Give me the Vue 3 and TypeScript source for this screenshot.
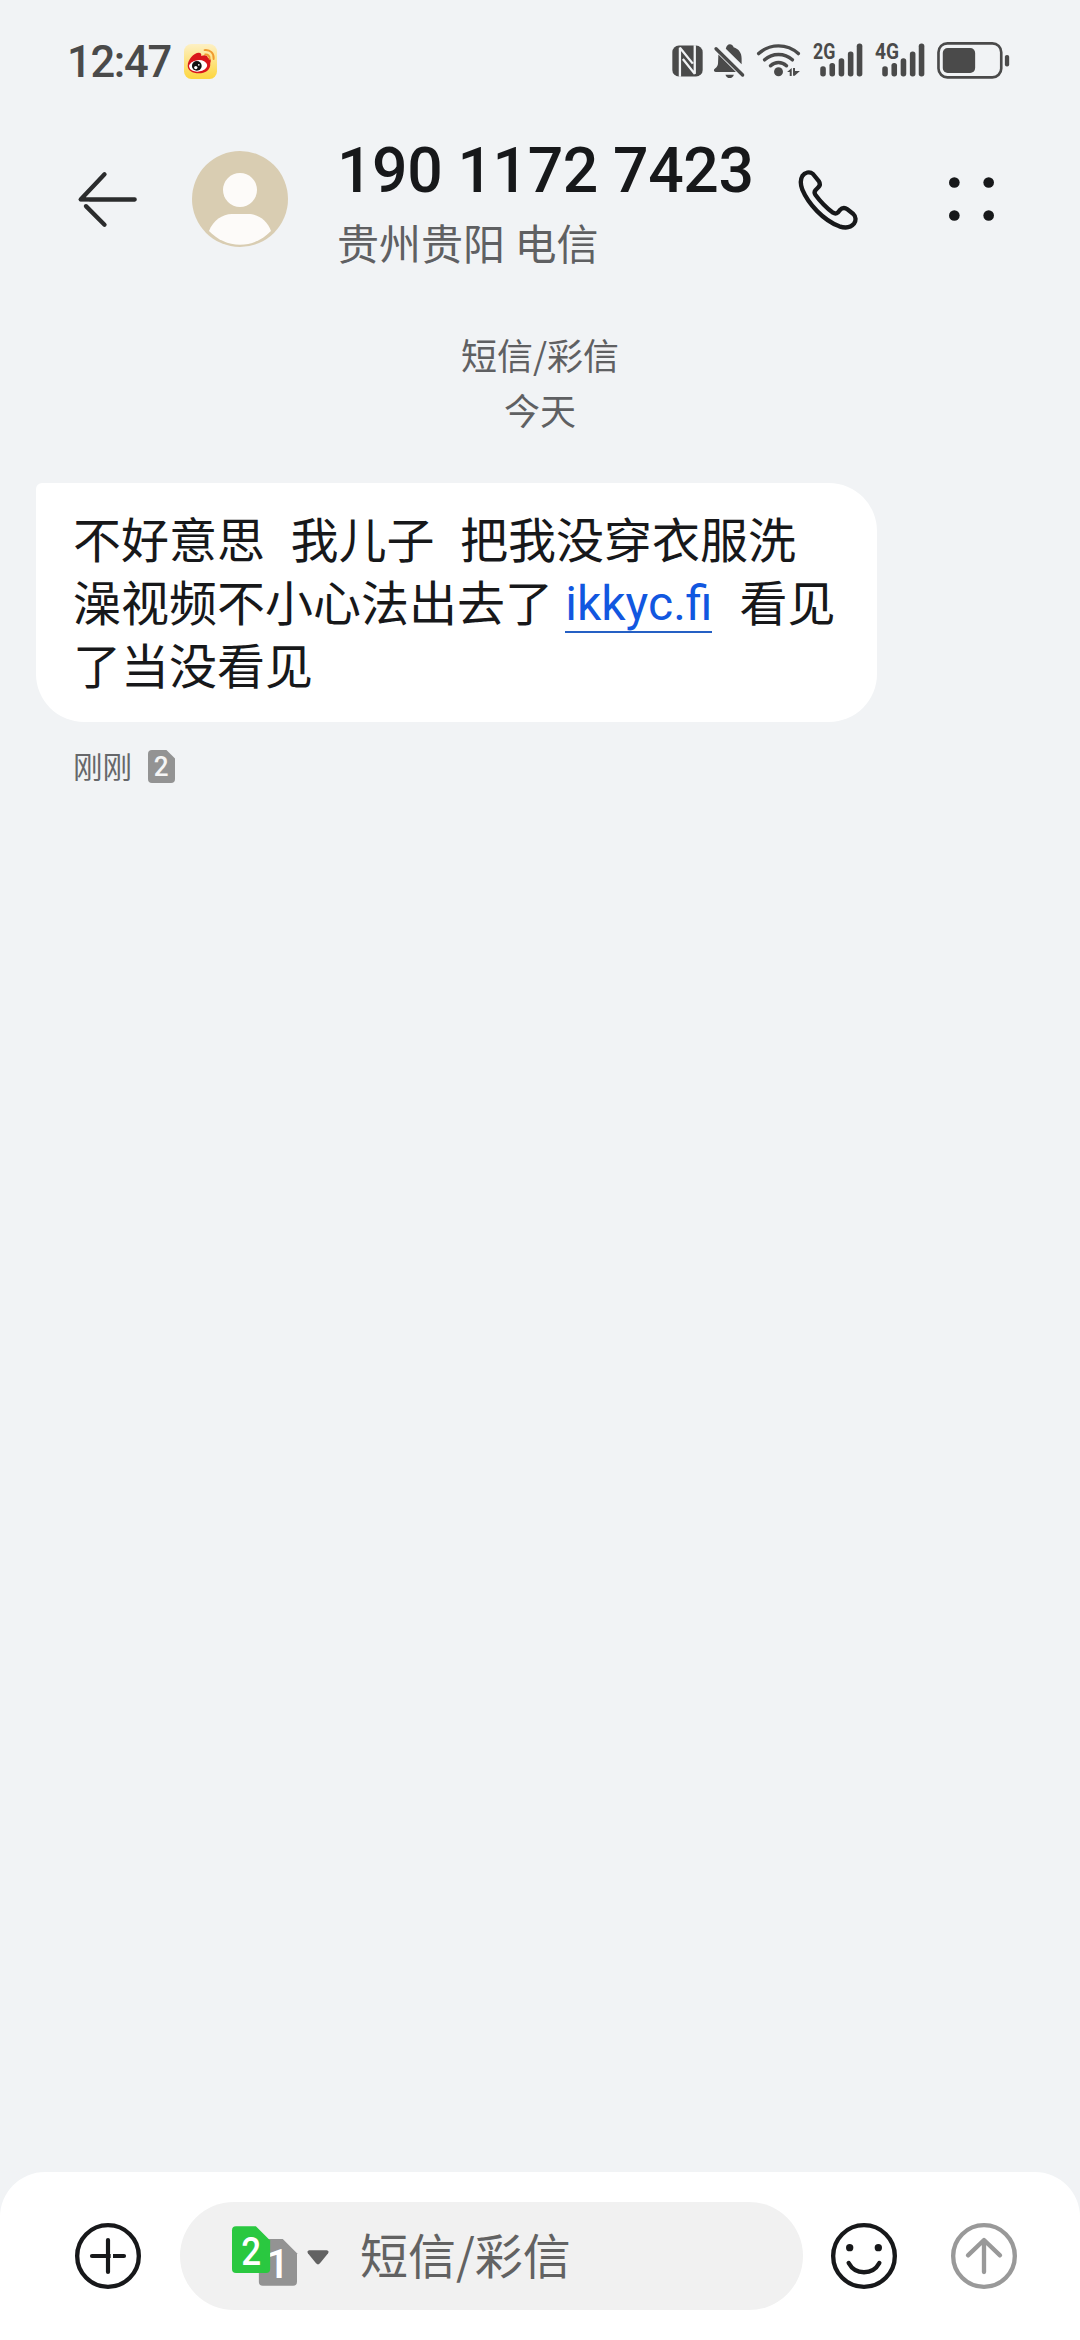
<script setup lang="ts">
const phone = '190 1172 7423'
const region = '贵州贵阳 电信'
const channel = '短信/彩信'
const spaces = '  '
const signals: { label: string; width: number }[] = [
  { label: '2G', width: 68 },
  { label: '4G', width: 73 },
]
const bars = [
  { x: 22, top: 70 },
  { x: 50, top: 60 },
  { x: 78, top: 46 },
  { x: 106, top: 25 },
  { x: 133, top: 1 },
]
const dots = [[16, 16], [119, 16], [16, 115], [119, 115]]
</script>

<template>
  <div class="screen">
    <div class="status">
      <span class="clock">12:47</span>
      <svg class="weibo" viewBox="0 0 98 104">
        <defs>
          <linearGradient id="wb" x1="0" y1="0" x2="0" y2="1">
            <stop offset="0" stop-color="#fdf0c4" />
            <stop offset="1" stop-color="#fdd63f" />
          </linearGradient>
        </defs>
        <rect width="98" height="104" rx="22" fill="url(#wb)" />
        <path d="M11 65c0-19 18-39 33-39 6 0 9 5 7 10 9-4 19-4 20 5 10 3 10 10 7 16 2 21-16 30-34 30-19 0-33-9-33-22z" fill="#d9161c" />
        <ellipse cx="42" cy="65" rx="27" ry="17" fill="#fff" transform="rotate(-6 42 65)" />
        <circle cx="38" cy="65" r="14.500" fill="#111" />
        <circle cx="35" cy="70" r="5" fill="#fff" />
        <circle cx="44" cy="62" r="2.500" fill="#fff" />
        <path d="M61 18c17-2 29 10 27 27M63 31c8-1 14 5 13 13" fill="none" stroke="#f09a30" stroke-width="5.500" stroke-linecap="round" />
      </svg>
      <div class="indicators">
        <svg class="nfc" viewBox="0 0 94 96">
          <rect x="1" y="1" width="92" height="94" rx="20" fill="#4a4a4a" />
          <path d="M24 96V8L63 56M69 0V87L33 42" fill="none" stroke="#f1f3f5" stroke-width="7" stroke-linejoin="bevel" />
        </svg>
        <svg class="bell" viewBox="0 0 92 104" fill="#4a4a4a">
          <path d="M35 14c2-8 6-13 12-13s10 4 11 9c16 5 24 17 24 33v17z" />
          <path d="M13 31 65 83 H5c-6 0-7-7-2-10 7-6 9-10 9-18z" />
          <path d="M6 14 85 92" stroke="#4a4a4a" stroke-width="10" stroke-linecap="round" />
          <path d="M34 91h25c-2 7-7 10-12.500 10S36 98 34 91z" />
        </svg>
        <svg class="wifi" viewBox="0 0 134 106">
          <g fill="none" stroke="#4a4a4a" stroke-width="10.500" stroke-linecap="round">
            <path d="M7 32c34-31 86-31 120 0M25 51c24-22 60-22 84 0M43 69c14-13 34-13 48 0" />
          </g>
          <circle cx="67" cy="87" r="13.500" fill="#4a4a4a" />
          <path d="M93 88 107 76V100H101V88zM111 76h6v9h15L116 99h-5z" fill="#4a4a4a" />
        </svg>
        <svg v-for="s in signals" :key="s.label" class="signal" viewBox="0 0 152 102">
          <text x="0" y="49" :textLength="s.width" lengthAdjust="spacingAndGlyphs">{{ s.label }}</text>
          <rect v-for="b in bars" :key="b.x" :x="b.x" :y="b.top" width="17" :height="101 - b.top" rx="8" fill="#4a4a4a" />
        </svg>
        <svg class="battery" viewBox="0 0 220 112">
          <rect x="4" y="4" width="190" height="103" rx="27" fill="none" stroke="#4a4a4a" stroke-width="8" />
          <rect x="17" y="18" width="98" height="76" rx="15" fill="#4a4a4a" />
          <rect x="205" y="39" width="13" height="35" rx="6" fill="#4a4a4a" />
        </svg>
      </div>
    </div>

    <header class="header">
      <svg class="back" viewBox="82 151 182 172" fill="none" stroke="#2b2c2d" stroke-width="13" stroke-linecap="round" stroke-linejoin="round">
        <path d="M164 161 92 237H255" />
        <path d="M108 257 164 313" />
        <path d="M88 247.500h30" stroke="#f1f3f5" stroke-width="7" stroke-linecap="butt" />
      </svg>
      <svg class="avatar" viewBox="426 93 288 288">
        <circle cx="570" cy="237" r="144" fill="#d9cdb2" />
        <circle cx="570" cy="210" r="51" fill="#fdfbf9" />
        <path d="M477 333C489 302 517 282 546 282H594C624 282 652 302 663 333C638 359 606 374 570 374S502 359 477 333z" fill="#fdfbf9" />
      </svg>
      <div class="who">
        <div class="number">{{ phone }}</div>
        <div class="region">{{ region }}</div>
      </div>
      <svg class="call" viewBox="78 108 192 192" fill="none" stroke="#17181a" stroke-width="13" stroke-linejoin="round">
        <path d="M97 135C104 124 119 120 129 129L147 151Q153 160 145 169L137 177Q131 184 136 191C150 210 170 231 189 245Q197 250 204 244L209 238Q220 226 232 235L250 249C259 257 258 270 252 278C242 290 226 292 208 286C160 268 115 219 97 176C91 160 90 147 97 135z" />
      </svg>
      <svg class="more" viewBox="0 0 135 131" fill="#17181a">
        <circle v-for="(d, i) in dots" :key="i" :cx="d[0]" :cy="d[1]" r="16" />
      </svg>
    </header>

    <main class="thread">
      <div class="stamp">
        <div>{{ channel }}</div>
        <div>今天</div>
      </div>
      <div class="bubble">
        <div class="line">不好意思<span class="gap">{{ spaces }}</span>我儿子<span class="gap">{{ spaces }}</span>把我没穿衣服洗</div>
        <div class="line">澡视频不小心法出去了&#32;<a class="link">ikkyc.fi</a><span class="gap wide">{{ spaces }}</span>看见</div>
        <div class="line">了当没看见</div>
      </div>
      <div class="meta">
        <span class="when">刚刚</span>
        <svg class="sim" viewBox="0 0 82 100">
          <path d="M12 0H56L82 26V88Q82 100 70 100H12Q0 100 0 88V12Q0 0 12 0z" fill="#939393" />
          <text x="40" y="80" text-anchor="middle" font-size="85" textLength="45" lengthAdjust="spacingAndGlyphs" fill="#f5f5f5">2</text>
        </svg>
      </div>
    </main>

    <footer class="composer">
      <svg class="round" viewBox="0 0 198 198" fill="none" stroke="#17181a" stroke-width="13" stroke-linecap="round">
        <circle cx="99" cy="99" r="92.500" />
        <path d="M99 51V147M51 99H147" stroke-width="12.500" />
        <path d="M110.500 90v18" stroke="#fff" stroke-width="7" stroke-linecap="butt" />
      </svg>
      <div class="field">
        <svg class="sims" viewBox="0 0 196 180">
          <path d="M93 39H153L196 82V168Q196 180 184 180H93Q81 180 81 168V51Q81 39 93 39z" fill="#939393" />
          <text x="138" y="155" text-anchor="middle" font-size="125" fill="#fff">1</text>
          <path d="M12 0H72L115 43V129Q115 141 103 141H12Q0 141 0 129V12Q0 0 12 0z" fill="#2ac840" />
          <text x="58" y="118" text-anchor="middle" font-size="117" textLength="60" lengthAdjust="spacingAndGlyphs" fill="#fff">2</text>
        </svg>
        <svg class="caret" viewBox="0 0 66 46">
          <path d="M6 1H60Q68 3 64 10L39 41Q33 48 27 41L2 10Q-2 3 6 1z" fill="#626262" />
        </svg>
        <span class="placeholder">{{ channel }}</span>
      </div>
      <svg class="round smile" viewBox="0 0 198 198" fill="none" stroke="#17181a" stroke-width="13" stroke-linecap="round">
        <circle cx="99" cy="99" r="92.500" />
        <path d="M53 120C73 157 125 157 145 120" />
        <circle cx="56" cy="74" r="11" fill="#17181a" stroke="none" />
        <circle cx="142" cy="74" r="11" fill="#17181a" stroke="none" />
      </svg>
      <svg class="round send" viewBox="0 0 198 198" fill="none" stroke="#999" stroke-width="13" stroke-linecap="round" stroke-linejoin="round">
        <circle cx="99" cy="99" r="92.500" />
        <path d="M99 147V52M51 97 99 51 147 97" />
      </svg>
    </footer>
  </div>
</template>

<style>
body {
  margin: 0;
}
</style>

<style scoped>
.screen {
  width: 1080px;
  height: 2340px;
  display: flex;
  flex-direction: column;
  overflow: hidden;
  background: #f1f3f5;
  color: #17181a;
  font-family: "Noto Sans CJK SC", sans-serif;
}
svg {
  display: block;
  flex: none;
  overflow: visible;
}
svg text {
  font-family: Roboto, sans-serif;
  font-weight: 500;
}
.status {
  height: 119px;
  display: flex;
  align-items: flex-start;
  padding: 0 70px 0 67px;
}
.clock {
  width: 117px;
  padding-top: 33px;
  font-family: Roboto, sans-serif;
  font-size: 43.5px;
  line-height: 60px;
  font-weight: 500;
  letter-spacing: -1.3px;
  color: #4a4a4a;
}
.weibo {
  width: 33px;
  height: 35px;
  margin-top: 44px;
}
.indicators {
  margin-left: auto;
  display: flex;
}
.nfc {
  width: 31px;
  height: 32px;
  margin: 45px 11px 0 0;
}
.bell {
  width: 31px;
  height: 35px;
  margin: 44px 11px 0 0;
}
.wifi {
  width: 45px;
  height: 35px;
  margin: 43px 12px 0 0;
}
.signal {
  width: 50px;
  height: 34px;
  margin: 43px 12px 0 0;
}
.signal text {
  font-size: 66px;
  font-weight: 700;
  fill: #4a4a4a;
}
.battery {
  width: 73px;
  height: 37px;
  margin-top: 42px;
}
.header {
  height: 160px;
  display: flex;
  align-items: center;
  padding: 0 84px 0 77px;
}
.back {
  width: 61px;
  height: 57px;
}
.avatar {
  width: 96px;
  height: 96px;
  margin-left: 54px;
}
.who {
  width: 459px;
  margin-left: 49px;
  padding-top: 3px;
  white-space: nowrap;
}
.number {
  font-family: Roboto, sans-serif;
  font-size: 62.5px;
  line-height: 74px;
  font-weight: 500;
  letter-spacing: -0.4px;
}
.region {
  margin-top: 10px;
  margin-bottom: 2px;
  font-size: 42px;
  line-height: 48px;
  color: #5f6062;
}
.call {
  width: 64px;
  height: 64px;
}
.more {
  width: 45px;
  height: 44px;
  margin-left: 89px;
}
.thread {
  flex: 1;
  display: flex;
  flex-direction: column;
  align-items: flex-start;
  padding: 48px 36px 0;
}
.stamp {
  align-self: stretch;
  text-align: center;
  font-size: 36px;
  line-height: 55px;
  color: #5f6062;
}
.bubble {
  width: 841px;
  height: 239px;
  box-sizing: border-box;
  margin-top: 46px;
  padding: 23px 0 0 37px;
  border-radius: 6px 48px 48px 48px;
  background: #fff;
}
.line {
  height: 63px;
  font-size: 48px;
  line-height: 63px;
  white-space: pre;
}
.gap {
  letter-spacing: 2px;
}
.wide {
  letter-spacing: 2.8px;
}
.link {
  display: inline-block;
  height: 64px;
  box-sizing: border-box;
  margin-left: 1.5px;
  font-family: Roboto, sans-serif;
  line-height: 69px;
  color: #1157e0;
  border-bottom: 2px solid #2560c4;
  vertical-align: top;
}
.meta {
  display: flex;
  align-items: center;
  gap: 16px;
  height: 44px;
  margin: 22px 0 0 37px;
  font-size: 29.5px;
  line-height: 44px;
  color: #66676a;
}
.when {
  height: 47px;
}
.sim {
  width: 27px;
  height: 33px;
}
.composer {
  height: 168px;
  box-sizing: border-box;
  display: flex;
  align-items: center;
  padding: 0 63px 0 75px;
  border-radius: 45px 45px 0 0;
  background: #fff;
}
.round {
  width: 66px;
  height: 66px;
}
.field {
  width: 623px;
  height: 108px;
  box-sizing: border-box;
  display: flex;
  align-items: center;
  margin-left: 39px;
  padding-left: 52px;
  border-radius: 54px;
  background: #f1f1f1;
}
.sims {
  width: 65px;
  height: 60px;
}
.caret {
  width: 22px;
  height: 15px;
  margin: 3px 0 0 10px;
}
.placeholder {
  margin: 0 0 6px 31px;
  font-size: 48px;
  line-height: 70px;
  color: #626262;
}
.smile {
  margin-left: 28px;
}
.send {
  margin-left: 54px;
}
</style>
